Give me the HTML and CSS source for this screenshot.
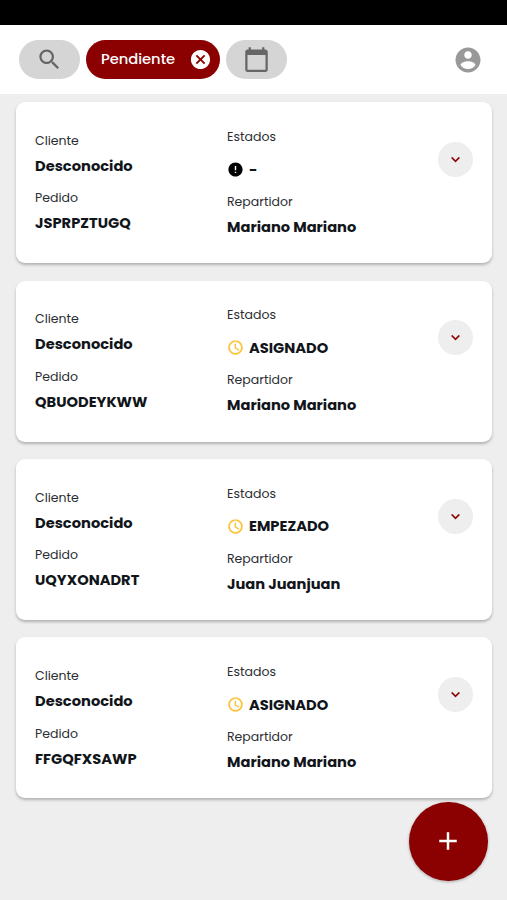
FILE: index.html
```
<!DOCTYPE html>
<html lang="es">
<head>
    <meta charset="UTF-8">
    <meta name="viewport" content="width=device-width, initial-scale=1.0">
    <title>Pedidos</title>
    <link rel="stylesheet" href="styles.css">
</head>
<body>
    <!-- Iconos compartidos por las tarjetas -->
    <svg class="sprite" width="0" height="0">
        <symbol id="icon-clock" viewBox="0 0 24 24">
            <path d="M11.99 2C6.47 2 2 6.48 2 12s4.47 10 9.99 10C17.52 22 22 17.52 22 12S17.52 2 11.99 2zM12 20c-4.42 0-8-3.58-8-8s3.58-8 8-8 8 3.58 8 8-3.58 8-8 8zm.5-13H11v6l5.25 3.15.75-1.23-4.5-2.67z"/>
        </symbol>
        <symbol id="icon-error" viewBox="0 0 24 24">
            <path d="M12 2C6.48 2 2 6.48 2 12s4.48 10 10 10 10-4.480 10-10S17.520 2 12 2zm1 15h-2v-2h2v2zm0-4h-2V7h2v6z"/>
        </symbol>
        <symbol id="icon-down" viewBox="0 0 24 24">
            <path d="M7.410 8.590L12 13.170l4.590-4.580L18 10l-6 6-6-6z"/>
        </symbol>
    </svg>

    <div class="status-bar"></div>

    <!-- Barra de filtros -->
    <header class="toolbar">
        <button class="chip" aria-label="Buscar">
            <svg class="icon-search" viewBox="0 0 24 24"><path d="M15.500 14h-.79l-.28-.27C15.410 12.590 16 11.110 16 9.500 16 5.910 13.090 3 9.500 3S3 5.910 3 9.500 5.910 16 9.500 16c1.610 0 3.090-.59 4.230-1.570l.27.28v.79l5 4.990L20.490 19l-4.990-5zm-6 0C7.010 14 5 11.990 5 9.500S7.010 5 9.500 5 14 7.010 14 9.500 11.990 14 9.500 14z"/></svg>
        </button>
        <button class="chip chip-active">
            <span>Pendiente</span>
            <svg class="icon-cancel" viewBox="0 0 24 24"><path d="M12 2C6.470 2 2 6.470 2 12s4.470 10 10 10 10-4.470 10-10S17.530 2 12 2zm5 13.590L15.590 17 12 13.410 8.410 17 7 15.590 10.590 12 7 8.410 8.410 7 12 10.590 15.590 7 17 8.410 13.410 12 17 15.590z"/></svg>
        </button>
        <button class="chip" aria-label="Fecha">
            <svg class="icon-calendar" viewBox="0 0 24 24"><path d="M20 3h-1V1h-2v2H7V1H5v2H4c-1.100 0-2 .9-2 2v16c0 1.100.9 2 2 2h16c1.100 0 2-.9 2-2V5c0-1.100-.9-2-2-2zm0 18H4V8h16v13z"/></svg>
        </button>
        <button class="account" aria-label="Cuenta">
            <svg class="icon-account" viewBox="0 0 24 24"><path d="M12 2C6.480 2 2 6.480 2 12s4.480 10 10 10 10-4.480 10-10S17.520 2 12 2zm0 3c1.660 0 3 1.340 3 3s-1.340 3-3 3-3-1.340-3-3 1.340-3 3-3zm0 14.200c-2.500 0-4.710-1.280-6-3.220.03-1.990 4-3.080 6-3.080 1.990 0 5.970 1.090 6 3.080-1.290 1.940-3.500 3.220-6 3.220z"/></svg>
        </button>
    </header>

    <!-- Lista de pedidos -->
    <main class="orders">
        <article class="card">
            <div class="col">
                <p class="label">Cliente</p>
                <p class="value">Desconocido</p>
                <p class="label label-pedido">Pedido</p>
                <p class="value">JSPRPZTUGQ</p>
            </div>
            <div class="col">
                <p class="label">Estados</p>
                <p class="value state"><svg class="icon-state error"><use href="#icon-error"/></svg><span>-</span></p>
                <p class="label">Repartidor</p>
                <p class="value">Mariano Mariano</p>
            </div>
            <button class="expand" aria-label="Ver más"><svg><use href="#icon-down"/></svg></button>
        </article>

        <article class="card">
            <div class="col">
                <p class="label">Cliente</p>
                <p class="value">Desconocido</p>
                <p class="label label-pedido">Pedido</p>
                <p class="value">QBUODEYKWW</p>
            </div>
            <div class="col">
                <p class="label">Estados</p>
                <p class="value state"><svg class="icon-state"><use href="#icon-clock"/></svg><span>ASIGNADO</span></p>
                <p class="label">Repartidor</p>
                <p class="value">Mariano Mariano</p>
            </div>
            <button class="expand" aria-label="Ver más"><svg><use href="#icon-down"/></svg></button>
        </article>

        <article class="card">
            <div class="col">
                <p class="label">Cliente</p>
                <p class="value">Desconocido</p>
                <p class="label label-pedido">Pedido</p>
                <p class="value">UQYXONADRT</p>
            </div>
            <div class="col">
                <p class="label">Estados</p>
                <p class="value state"><svg class="icon-state"><use href="#icon-clock"/></svg><span>EMPEZADO</span></p>
                <p class="label">Repartidor</p>
                <p class="value">Juan Juanjuan</p>
            </div>
            <button class="expand" aria-label="Ver más"><svg><use href="#icon-down"/></svg></button>
        </article>

        <article class="card">
            <div class="col">
                <p class="label">Cliente</p>
                <p class="value">Desconocido</p>
                <p class="label label-pedido">Pedido</p>
                <p class="value">FFGQFXSAWP</p>
            </div>
            <div class="col">
                <p class="label">Estados</p>
                <p class="value state"><svg class="icon-state"><use href="#icon-clock"/></svg><span>ASIGNADO</span></p>
                <p class="label">Repartidor</p>
                <p class="value">Mariano Mariano</p>
            </div>
            <button class="expand" aria-label="Ver más"><svg><use href="#icon-down"/></svg></button>
        </article>
    </main>

    <!-- Botón flotante -->
    <button class="fab" aria-label="Nuevo pedido">
        <svg viewBox="0 0 24 24"><path d="M19 13h-6v6h-2v-6H5v-2h6V5h2v6h6v2z"/></svg>
    </button>
</body>
</html>
```
FILE: styles.css
```
* {
    box-sizing: border-box;
}
body {
    margin: 0;
    height: 900px;
    overflow: hidden;
    background-color: #eeeeee;
    font-family: Poppins, Inter, sans-serif;
    color: #11151a;
}
p {
    margin: 0;
}
button {
    border: none;
    padding: 0;
    font-family: inherit;
    cursor: pointer;
}
svg {
    display: block;
    fill: currentColor;
}
.sprite {
    position: absolute;
}

.status-bar {
    height: 25px;
    background-color: #000000;
}

/* Barra de filtros */
.toolbar {
    display: flex;
    align-items: center;
    gap: 6px;
    height: 69px;
    padding: 0 24px 0 19.4px;
    background-color: #ffffff;
}
.chip {
    display: flex;
    align-items: center;
    justify-content: center;
    width: 61px;
    height: 39px;
    border-radius: 20px;
    background-color: #d5d5d5;
    color: #666666;
}
.chip-active {
    justify-content: space-between;
    width: 133.5px;
    padding: 0 8px 0 14.5px;
    background-color: #8b0000;
    color: #ffffff;
    font-size: 14.7px;
    font-weight: 500;
}
.icon-search {
    width: 27px;
    height: 27px;
}
.icon-cancel {
    width: 23px;
    height: 23px;
}
.icon-calendar {
    width: 27px;
    height: 27px;
}
.account {
    margin-left: auto;
    background: none;
    color: #999999;
}
.icon-account {
    width: 30px;
    height: 30px;
}

/* Tarjetas */
.orders {
    display: flex;
    flex-direction: column;
    gap: 17.4px;
    padding: 8.3px 15px 0 16px;
}
.card {
    display: flex;
    align-items: center;
    height: 161px;
    padding: 3.6px 19px 0;
    border-radius: 9px;
    background-color: #ffffff;
    box-shadow: 0 2px 3px rgba(0, 0, 0, 0.25);
}
.col {
    width: 192px;
}
.label {
    font-size: 12.5px;
    line-height: 20px;
    color: #2a2d31;
}
.value {
    font-size: 14.65px;
    font-weight: 700;
    line-height: 30px;
    white-space: nowrap;
}
.label-pedido {
    margin-top: 7.5px;
}
.state {
    display: flex;
    align-items: center;
    gap: 5px;
    height: 45px;
}
.icon-state {
    width: 17px;
    height: 17px;
    color: #fbc02d;
    stroke: currentColor;
    stroke-width: 0.4;
}
.error {
    color: #000000;
    stroke: none;
}
.expand {
    display: flex;
    align-items: center;
    justify-content: center;
    align-self: flex-start;
    width: 35px;
    height: 35px;
    margin-top: 36.2px;
    margin-left: auto;
    border-radius: 50%;
    background-color: #eeeeee;
    color: #8b0000;
}
.expand svg {
    width: 17px;
    height: 17px;
    stroke: currentColor;
    stroke-width: 0.4;
}

/* Botón flotante */
.fab {
    position: fixed;
    right: 19.5px;
    bottom: 19.5px;
    display: flex;
    align-items: center;
    justify-content: center;
    width: 78.5px;
    height: 78.5px;
    border-radius: 50%;
    background-color: #8b0000;
    color: #ffffff;
    box-shadow: 0 1px 3px rgba(0, 0, 0, 0.3);
}
.fab svg {
    width: 30px;
    height: 30px;
}
```
